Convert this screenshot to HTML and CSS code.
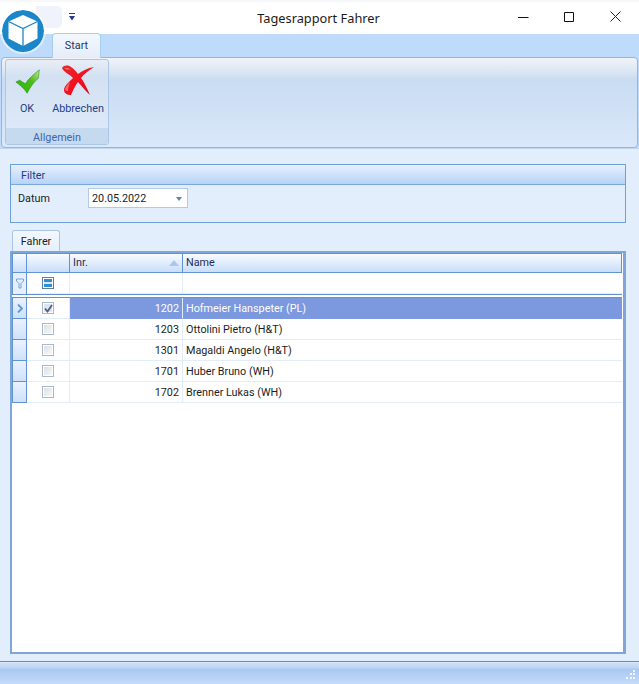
FILE: index.html
```html
<!DOCTYPE html>
<html lang="de">
<head>
<meta charset="utf-8">
<title>Tagesrapport Fahrer</title>
<link rel="stylesheet" href="styles.css">
</head>
<body>
<div class="window">
  <header class="titlebar">
    <div class="qat-slot"></div>
    <svg class="qat-arrow" width="6" height="8" viewBox="0 0 6 8"><path d="M0 .5h6" stroke="#24378f" stroke-width="1"/><path d="M0 3h6L3 7.500z" fill="#24378f"/></svg>
    <div class="title">Tagesrapport Fahrer</div>
    <div class="winbtns">
      <svg width="11" height="11" viewBox="0 0 11 11"><path d="M0 6.500h10.500" stroke="#111" fill="none"/></svg>
      <svg width="11" height="11" viewBox="0 0 11 11"><path d="M.5 1.500h9v9h-9z" stroke="#111" fill="none"/></svg>
      <svg width="11" height="11" viewBox="0 0 11 11"><path d="M.5.500l10 10M10.500.500l-10 10" stroke="#222" fill="none"/></svg>
    </div>
  </header>
  <svg class="logo" width="42" height="42" viewBox="0 0 42 42">
    <circle cx="21" cy="21" r="21" fill="#1b86c9"/>
    <path d="M21 5l14.500 6.500v17L21 36 6.500 28.500v-17z" fill="#fff"/>
    <path d="M6.500 11.500L21 18.500l14.500-7M21 18.500V36" stroke="#1b86c9" stroke-width="1.300" fill="none"/>
  </svg>
  <section class="ribbon">
    <div class="tabstrip"><div class="rtab">Start</div></div>
    <div class="rpanel">
      <div class="rgroup">
        <div class="rbuttons">
          <div class="rbtn rbtn-ok">
            <svg width="28" height="28" viewBox="0 0 30 28">
              <defs>
                <linearGradient id="g" x1="0" y1="1" x2="1" y2="0"><stop offset="0" stop-color="#22b80a"/><stop offset=".6" stop-color="#4fbc18"/><stop offset="1" stop-color="#c4e69a"/></linearGradient>
                <linearGradient id="r" x1="0" y1="0" x2="1" y2="1"><stop offset="0" stop-color="#e8292f"/><stop offset=".6" stop-color="#f40d1c"/><stop offset="1" stop-color="#b8141c"/></linearGradient>
              </defs>
              <path d="M1 14l4-2 6 4C15 10 20 6 26 1c-.5 4-.5 6.500-1 9-5 4-9 10-12 16C10 21 5 17 1 14z" fill="url(#g)" stroke="#1f8a10" stroke-width=".6"/>
            </svg>
            <span>OK</span>
          </div>
          <div class="rbtn rbtn-x">
            <svg width="34" height="31" viewBox="0 0 34 31">
              <path d="M1 3c2-3 6-3 9-1 3 2 5 4 7 7C21 6 27 3 33 2c-5 3-10 7-13 11 3 4 6 10 9 17-5-4-8-9-12-13-3 4-5 8-7 13C7 30 3 29 3 25c0-4 5-8 9-12C9 9 3 8 1 3z" fill="url(#r)"/>
              <path d="M4 24c1-3 3-5 5-7-1 3-2 6-2 9-1.500.2-3-.5-3-2zM3 3.500c2-1 5-.5 7 1-2 0-5 0-7-1z" fill="#fff" opacity=".35"/>
            </svg>
            <span>Abbrechen</span>
          </div>
        </div>
        <div class="rgroup-label">Allgemein</div>
      </div>
    </div>
  </section>
  <main class="content">
    <section class="filter">
      <div class="filter-head">Filter</div>
      <div class="filter-body">
        <label class="filter-label">Datum</label>
        <div class="datebox"><span>20.05.2022</span><svg width="6" height="4" viewBox="0 0 6 4"><path d="M0 0h6L3 4z" fill="#6b7f9e"/></svg></div>
      </div>
    </section>
    <div class="gtabs"><div class="gtab">Fahrer</div></div>
    <section class="gridframe">
      <div class="grid">
        <div class="row head">
          <div class="ind"></div><div class="chk"></div>
          <div class="inr">Inr.<svg class="sort" width="10" height="6" viewBox="0 0 10 6"><path d="M0 6h10L5 0z" fill="#a9c8ee"/></svg></div>
          <div class="name">Name</div>
        </div>
        <div class="row autofilter">
          <div class="ind"><svg width="8" height="11" viewBox="0 0 8 11"><path d="M.5 1h7v2L5 5.500V10H3V5.500L.5 3z" fill="none" stroke="#6fa5d8"/></svg></div>
          <div class="chk"><span class="box indeterminate"><i></i></span></div>
          <div class="inr"></div><div class="name"></div>
        </div>
        <div class="sep"></div>
        <div class="row data selected">
          <div class="ind"><svg width="6" height="9" viewBox="0 0 6 9"><path d="M1 .5l4 4-4 4" fill="none" stroke="#5f96d4" stroke-width="1.800"/></svg></div>
          <div class="chk"><span class="box"><svg width="9" height="9" viewBox="0 0 9 9"><path d="M1 4.500l2.500 3L8 1" fill="none" stroke="#4a5f8a" stroke-width="1.800"/></svg></span></div>
          <div class="inr num">1202</div><div class="name">Hofmeier Hanspeter (PL)</div>
        </div>
        <div class="row data"><div class="ind"></div><div class="chk"><span class="box"></span></div><div class="inr num">1203</div><div class="name">Ottolini Pietro (H&amp;T)</div></div>
        <div class="row data"><div class="ind"></div><div class="chk"><span class="box"></span></div><div class="inr num">1301</div><div class="name">Magaldi Angelo (H&amp;T)</div></div>
        <div class="row data"><div class="ind"></div><div class="chk"><span class="box"></span></div><div class="inr num">1701</div><div class="name">Huber Bruno (WH)</div></div>
        <div class="row data"><div class="ind"></div><div class="chk"><span class="box"></span></div><div class="inr num">1702</div><div class="name">Brenner Lukas (WH)</div></div>
      </div>
    </section>
  </main>
  <footer class="status">
    <svg width="11" height="10" viewBox="0 0 11 10" fill="#f4f8fe"><path d="M8 0h2v2H8zM5 3h2v2H5zM8 3h2v2H8zM1 7h2v2H1zM5 7h2v2H5zM8 7h2v2H8z"/></svg>
  </footer>
</div>
</body>
</html>
```
FILE: styles.css
```css
* { box-sizing: border-box; }
html, body { margin: 0; padding: 0; }
body { font-family: Roboto, "Liberation Sans", sans-serif; font-size: 10.800px; color: #1c1c1c; background: #fff; }
.window { position: relative; width: 639px; height: 684px; display: flex; flex-direction: column; overflow: hidden; }

.titlebar { height: 34px; flex: none; display: flex; align-items: flex-start; position: relative; background: #fff; border-top: 2px solid #f6f8fc; }
.qat-slot { width: 26px; height: 22px; margin: 4px 0 0 36px; background: #f0f3fb; border-radius: 0 5px 5px 0; }
.qat-arrow { margin: 11px 0 0 7px; }
.title { position: absolute; left: 0; right: 2px; top: 8px; text-align: center; font-family: "Noto Sans", sans-serif; font-size: 12.800px; line-height: 16px; color: #1a1a1a; }
.winbtns { margin-left: auto; display: flex; gap: 35px; padding: 9px 18px 0 0; }
.logo { position: absolute; left: 2px; top: 10px; z-index: 2; border-radius: 50%; box-shadow: 0 0 0 2px rgba(255, 255, 255, .5); }

.ribbon { height: 114px; flex: none; display: flex; flex-direction: column; background: #bfdbfb; }
.tabstrip { height: 23px; flex: none; padding-left: 52px; display: flex; align-items: flex-end; }
.rtab { width: 49px; height: 25px; margin-bottom: -1px; position: relative; z-index: 1; border: 1px solid #a8cdf2; border-bottom: 0; border-radius: 4px 4px 0 0; background: linear-gradient(#f3f8fe, #e6edf8); color: #23365f; text-align: center; line-height: 24px; }
.rpanel { flex: 1; margin: 0 1px 1px 1px; padding: 1px 0 2px 3px; border: 1px solid #8db8e6; border-radius: 4px; background: linear-gradient(#f1f3f8 0, #dbe6f3 14px, #c9dcf2 22px, #dae8f9 100%); }
.rgroup { width: 104px; height: 86px; display: flex; flex-direction: column; border: 1px solid #a9c7e8; border-radius: 3px; background: linear-gradient(#e9eef6 0, #d3e1f2 16px, #e0ebf9 100%); }
.rbuttons { flex: 1; display: flex; }
.rbtn { display: flex; flex-direction: column; align-items: center; color: #23408a; line-height: 14px; }
.rbtn span { display: block; }
.rbtn-ok { width: 42px; padding-top: 8px; }
.rbtn-ok svg { margin-bottom: 6px; margin-left: 3px; }
.rbtn-x { width: 60px; padding-top: 5px; }
.rbtn-x svg { margin-bottom: 6px; }
.rgroup-label { height: 16px; flex: none; background: #c5d9ef; color: #3f66b0; text-align: center; line-height: 19px; }

.content { flex: 1; background: #e3eefd; padding: 15px 13px 7px 10px; display: flex; flex-direction: column; min-height: 0; border-top: 1px solid #c2d6ee; }
.filter { height: 59px; flex: none; border: 1px solid #6f9fd8; display: flex; flex-direction: column; }
.filter-head { height: 20px; flex: none; padding-left: 10px; line-height: 21px; color: #1e3c82; border-bottom: 1px solid #7ba7dc; background: linear-gradient(#e6f0fd, #b6d3f7); }
.filter-body { flex: 1; display: flex; align-items: flex-start; padding: 3px 0 0 7px; }
.filter-label { width: 70px; line-height: 22px; }
.datebox { width: 100px; height: 20px; border: 1px solid #b6c9e2; background: #fff; display: flex; align-items: center; justify-content: space-between; padding: 1px 5px 0 3px; }

.gtabs { height: 21px; flex: none; margin-top: 7px; padding-left: 2px; display: flex; align-items: flex-end; }
.gtab { width: 48px; height: 21px; border: 1px solid #a9c6e8; border-bottom: 0; border-radius: 3px 3px 0 0; background: linear-gradient(#f4f8fe, #e6effc); line-height: 21px; text-align: center; }

.gridframe { flex: 1; min-height: 0; border: 2px solid #7ea6d8; border-right-width: 3px; background: #fff; padding: 0 1px 0 0; }
.grid { height: 100%; background: #fff; }
.row { display: flex; height: 21px; }
.ind { width: 15px; flex: none; display: flex; align-items: center; justify-content: center; border-left: 1px solid #5f93d4; border-right: 1px solid #5f93d4; border-bottom: 1px solid #5f93d4; background: linear-gradient(#eaf2fe, #cfe1f8); }
.chk { width: 43px; flex: none; display: flex; align-items: center; justify-content: center; border-right: 1px solid #e2edfb; border-bottom: 1px solid #e2edfb; }
.inr { width: 113px; flex: none; padding: 1px 3px 0; line-height: 20px; border-right: 1px solid #e2edfb; border-bottom: 1px solid #e2edfb; }
.name { flex: 1; padding: 1px 3px 0; line-height: 20px; border-bottom: 1px solid #e2edfb; }
.num { text-align: right; }

.head { height: 20px; }
.head .ind, .head .chk, .head .inr, .head .name { background: linear-gradient(#f7fbff, #c9def8); border-top: 1px solid #5f93d4; border-bottom: 1px solid #5f93d4; border-right: 1px solid #5f93d4; padding-top: 0; line-height: 17px; }
.head .inr { position: relative; color: #1e2f55; }
.head .name { color: #1e2f55; }
.sort { position: absolute; right: 3px; top: 6px; }

.autofilter .ind { background: #e6f0fd; border-bottom: 0; }
.sep { height: 4px; border-top: 1px solid #5f93d4; border-bottom: 1px solid #5f93d4; background: #fff; }

.box { width: 12px; height: 12px; display: flex; align-items: center; justify-content: center; border: 1px solid #aab8cc; background: linear-gradient(135deg, #d9dce2, #fbfbfc); box-shadow: inset 0 0 0 1px #fff; }
.indeterminate { border-color: #5c7fa8; background: #fff; box-shadow: none; padding: 1px; }
.indeterminate i { display: block; width: 8px; height: 8px; background: linear-gradient(#2f8fd0 0 3px, #d8eaf8 3px 5px, #2f8fd0 5px); }

.selected .inr, .selected .name { background: #7c98de; color: #fff; border-bottom-color: #7c98de; }
.selected .box { background: #dfe3ea; }

.status { height: 23px; flex: none; border-top: 1px solid #6f88b4; background: linear-gradient(#cfe1f8 0, #bcd5f5 6px, #a9c9f1 7px, #c3dafa 100%); display: flex; align-items: flex-end; justify-content: flex-end; padding: 0 3px 4px 0; box-shadow: inset 0 1px 0 #dbe8fa; }
```
